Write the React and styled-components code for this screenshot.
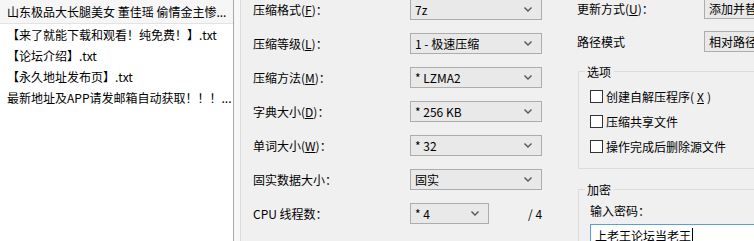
import React from "react";
import styled, { createGlobalStyle } from "styled-components";

const Global = createGlobalStyle`
    html, body {
        margin: 0;
        padding: 0;
        background: #f0f0f0;
    }
    body {
        font-family: "Noto Sans CJK SC", "Microsoft YaHei", sans-serif;
        font-size: 12px;
        color: #000;
    }
`;

const Screen = styled.div`
    width: 754px;
    height: 241px;
    display: flex;
    overflow: hidden;
    background: #f0f0f0;
`;

const FileList = styled.div`
    width: 233px;
    flex-shrink: 0;
    background: #fff;
    border-right: 1px solid #a8a8a8;
    display: flex;
    flex-direction: column;
`;

const HeaderRow = styled.div`
    height: 23px;
    line-height: 23px;
    padding-left: 7px;
    background: #f6f6f6;
    border-bottom: 1px solid #e3e3e3;
    white-space: nowrap;
    overflow: hidden;
`;

const FileRow = styled.div`
    height: 21px;
    line-height: 21px;
    padding-left: 7px;
    white-space: nowrap;
    overflow: hidden;
`;

const Splitter = styled.div`
    width: 6px;
    flex-shrink: 0;
    background: #f7f7f7;
    border-right: 1px solid #dcdcdc;
`;

const Dialog = styled.div`
    flex: 1;
    display: flex;
    padding-left: 12px;
    min-width: 0;
`;

const LeftColumn = styled.div`
    width: 289px;
    flex-shrink: 0;
    margin-top: -1px;
    display: flex;
    flex-direction: column;
    gap: 13px;
`;

const RightColumn = styled.div`
    width: 260px;
    flex-shrink: 0;
    margin-left: 35px;
    margin-top: -2px;
    display: flex;
    flex-direction: column;
`;

const Row = styled.div`
    height: 21px;
    display: flex;
    align-items: center;
    white-space: nowrap;
`;

const Label = styled.div`
    width: ${(props) => props.$w || 157}px;
    flex-shrink: 0;
    line-height: 21px;
`;

const Select = styled.div`
    width: ${(props) => props.$w || 132}px;
    height: 21px;
    box-sizing: border-box;
    flex-shrink: 0;
    border: 1px solid #adadad;
    background: #e9e9e9;
    display: flex;
    align-items: center;
    padding: 0 9px 0 4px;
    white-space: nowrap;
    overflow: hidden;

    span {
        flex: 1;
    }
`;

const Suffix = styled.div`
    margin-left: 39px;
`;

const GroupBox = styled.fieldset`
    margin: ${(props) => props.$top}px 0 0 1px;
    padding: 0 0 ${(props) => props.$bottom || 0}px 6px;
    border: 1px solid #dcdcdc;
    min-width: 0;

    legend {
        padding: 0 3px 0 2px;
        line-height: 17px;
        height: 17px;
    }
`;

const GroupBody = styled.div`
    margin-left: 5px;
    padding-top: ${(props) => props.$top}px;
    display: flex;
    flex-direction: column;
`;

const CheckRow = styled.label`
    height: 25px;
    display: flex;
    align-items: center;
    gap: 3px;
    white-space: nowrap;
`;

const Box = styled.span`
    width: 13px;
    height: 13px;
    box-sizing: border-box;
    border: 1px solid #333;
    background: #fff;
    flex-shrink: 0;
`;

const PassLabel = styled.div`
    line-height: 17px;
`;

const PassInput = styled.div`
    margin-top: 5px;
    height: 23px;
    box-sizing: border-box;
    border: 1px solid #569de5;
    background: #fff;
    padding-left: 4px;
    line-height: 21px;
    white-space: nowrap;
    display: flex;
    align-items: center;
`;

const Caret = styled.span`
    display: inline-block;
    width: 1px;
    height: 15px;
    background: #000;
    margin-left: 1px;
`;

const Chevron = () => (
    <svg width="8" height="5" viewBox="0 0 8 5">
        <polyline points="0.5,0.5 4,4 7.5,0.5" fill="none" stroke="#555" strokeWidth="1.4" />
    </svg>
);

const Combo = ({ value, w }) => (
    <Select $w={w}>
        <span>{value}</span>
        <Chevron />
    </Select>
);

const settings = [
    { label: <>压缩格式(<u>F</u>)：</>, value: "7z" },
    { label: <>压缩等级(<u>L</u>)：</>, value: "1 - 极速压缩" },
    { label: <>压缩方法(<u>M</u>)：</>, value: "* LZMA2" },
    { label: <>字典大小(<u>D</u>)：</>, value: "* 256 KB" },
    { label: <>单词大小(<u>W</u>)：</>, value: "* 32" },
    { label: "固实数据大小：", value: "固实" },
];

const files = [
    "【来了就能下载和观看！纯免费！】.txt",
    "【论坛介绍】.txt",
    "【永久地址发布页】.txt",
    "最新地址及APP请发邮箱自动获取！！！...",
];

const App = () => {
    return (
        <Screen>
            <Global />
            <FileList>
                <HeaderRow>山东极品大长腿美女 董佳瑶 偷情金主惨...</HeaderRow>
                {files.map((f) => (
                    <FileRow key={f}>{f}</FileRow>
                ))}
            </FileList>
            <Splitter />
            <Dialog>
                <LeftColumn>
                    {settings.map((s, i) => (
                        <Row key={i}>
                            <Label>{s.label}</Label>
                            <Combo value={s.value} />
                        </Row>
                    ))}
                    <Row>
                        <Label>CPU 线程数：</Label>
                        <Combo value="* 4" w={79} />
                        <Suffix>/ 4</Suffix>
                    </Row>
                    <Row>
                        <Label>压缩所需内存：</Label>
                    </Row>
                </LeftColumn>
                <RightColumn>
                    <Row>
                        <Label $w={127}>更新方式(<u>U</u>)：</Label>
                        <Combo value="添加并替换文件" />
                    </Row>
                    <Row style={{ marginTop: 12 }}>
                        <Label $w={127}>路径模式</Label>
                        <Combo value="相对路径" />
                    </Row>
                    <GroupBox $top={11} $bottom={9}>
                        <legend>选项</legend>
                        <GroupBody $top={4}>
                            <CheckRow>
                                <Box />
                                创建自解压程序(<u>X</u>)
                            </CheckRow>
                            <CheckRow>
                                <Box />
                                压缩共享文件
                            </CheckRow>
                            <CheckRow>
                                <Box />
                                操作完成后删除源文件
                            </CheckRow>
                        </GroupBody>
                    </GroupBox>
                    <GroupBox $top={12}>
                        <legend>加密</legend>
                        <GroupBody $top={4}>
                            <PassLabel>输入密码：</PassLabel>
                            <PassInput>
                                上老王论坛当老王
                                <Caret />
                            </PassInput>
                        </GroupBody>
                    </GroupBox>
                </RightColumn>
            </Dialog>
        </Screen>
    );
};

export default App;
